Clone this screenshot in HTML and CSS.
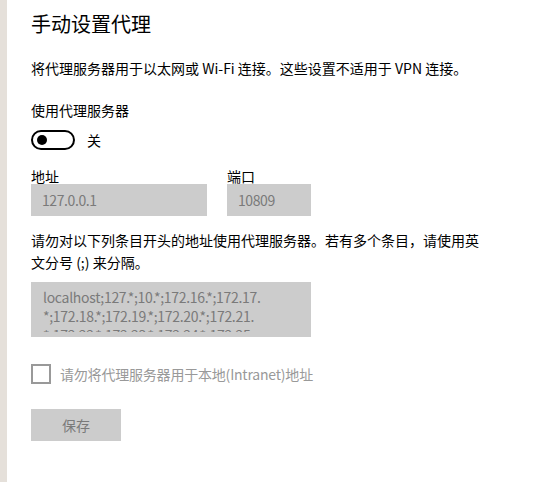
FILE: index.html
```html
<!DOCTYPE html>
<html lang="zh-CN">
<head>
<meta charset="utf-8">
<title>手动设置代理</title>
<link rel="stylesheet" href="styles.css">
</head>
<body>
<div class="window">
  <div class="edge"></div>
  <main class="content">
    <h1 class="title">手动设置代理</h1>
    <p class="desc">将代理服务器用于以太网或 Wi-Fi 连接。这些设置不适用于 VPN 连接。</p>
    <div class="label use-label">使用代理服务器</div>
    <div class="toggle-row">
      <span class="toggle"><span class="knob"></span></span>
      <span class="toggle-text">关</span>
    </div>
    <div class="fields">
      <div class="field">
        <div class="field-label">地址</div>
        <div class="input input-addr">127.0.0.1</div>
      </div>
      <div class="field">
        <div class="field-label">端口</div>
        <div class="input input-port">10809</div>
      </div>
    </div>
    <p class="desc2">请勿对以下列条目开头的地址使用代理服务器。若有多个条目，请使用英文分号 (;) 来分隔。</p>
    <div class="textarea">
      <div class="ta-inner">
        <div class="ta-line">localhost;127.*;10.*;172.16.*;172.17.</div>
        <div class="ta-line">*;172.18.*;172.19.*;172.20.*;172.21.</div>
        <div class="ta-line">*;172.22.*;172.23.*;172.24.*;172.25.</div>
      </div>
    </div>
    <label class="check-row">
      <span class="checkbox"></span>
      <span class="check-text">请勿将代理服务器用于本地(Intranet)地址</span>
    </label>
    <div class="button">保存</div>
  </main>
</div>
</body>
</html>
```

FILE: styles.css
```css
html, body {
  margin: 0;
  padding: 0;
  background: #ffffff;
}

body {
  font-family: "Noto Sans CJK SC", "Noto Sans", sans-serif;
  color: #000000;
  font-size: 14px;
}

.window {
  display: flex;
  width: 555px;
  height: 482px;
  overflow: hidden;
}

.edge {
  width: 7px;
  flex: none;
  background: #e5e0da;
}

.content {
  padding: 10px 0 0 24px;
  width: 456px;
}

.title {
  margin: 0;
  font-size: 20px;
  font-weight: normal;
  line-height: 28px;
}

.desc {
  margin: 20px 0 0;
  line-height: 20px;
  white-space: nowrap;
}

.use-label {
  margin-top: 22px;
  line-height: 20px;
}

.toggle-row {
  display: flex;
  align-items: center;
  gap: 12px;
  margin-top: 10px;
  height: 20px;
}

.toggle {
  box-sizing: border-box;
  width: 44px;
  height: 20px;
  border: 2px solid #000000;
  border-radius: 10px;
  display: flex;
  align-items: center;
  padding-left: 4px;
}

.knob {
  width: 10px;
  height: 10px;
  border-radius: 50%;
  background: #000000;
}

.toggle-text {
  line-height: 20px;
}

.fields {
  display: flex;
  gap: 20px;
  margin-top: 18px;
}

.field-label {
  line-height: 16px;
}

.input {
  box-sizing: border-box;
  height: 32px;
  background: #cccccc;
  color: #7a7a7a;
  padding-left: 11px;
  line-height: 32px;
  letter-spacing: -0.4px;
}

.input-addr {
  width: 176px;
}

.input-port {
  width: 84px;
}

.desc2 {
  margin: 13px 0 0;
  line-height: 22px;
}

.textarea {
  box-sizing: border-box;
  width: 280px;
  height: 55px;
  margin-top: 9px;
  background: #cccccc;
  color: #7a7a7a;
  padding: 6px 10px 5px 12px;
}

.ta-inner {
  height: 100%;
  overflow: hidden;
}

.ta-line {
  line-height: 19px;
  white-space: nowrap;
  letter-spacing: -0.3px;
}

.check-row {
  display: flex;
  align-items: center;
  gap: 9px;
  margin-top: 27px;
  height: 20px;
}

.checkbox {
  box-sizing: border-box;
  width: 20px;
  height: 20px;
  border: 2px solid #999999;
  flex: none;
}

.check-text {
  color: #999999;
  line-height: 20px;
  letter-spacing: -0.2px;
}

.button {
  width: 90px;
  height: 32px;
  margin-top: 25px;
  background: #cccccc;
  color: #7a7a7a;
  text-align: center;
  line-height: 32px;
}
```
